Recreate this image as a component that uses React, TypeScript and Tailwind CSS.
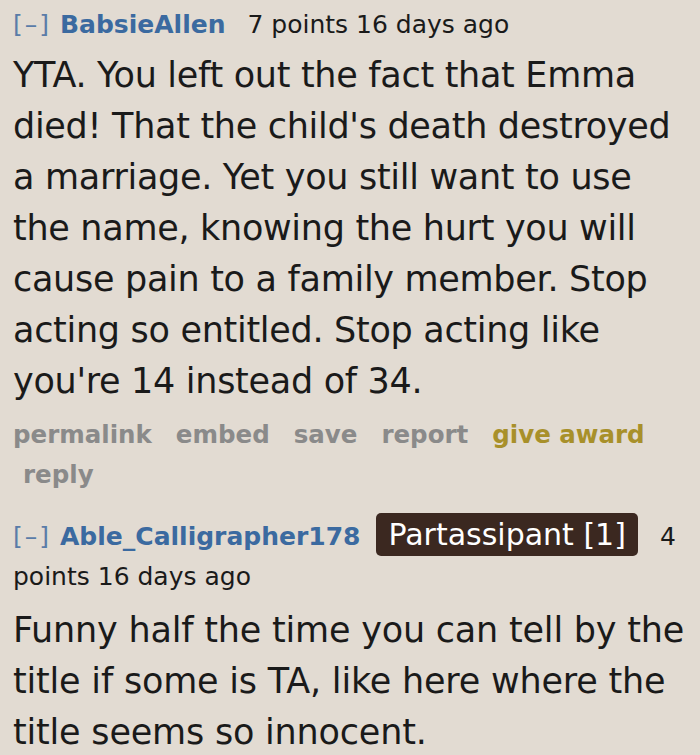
export default function App() {
  return (
    <div className="min-h-[755px] w-[700px] bg-[#e2dbd2] font-['DejaVu_Sans',sans-serif] text-[#1a1a1a]">
      <div className="pl-[13px] pt-[8px]">
        <div className="flex items-baseline text-[25px] leading-[34px]">
          <span className="tracking-[2px] text-[#5a7ca8]">[–]</span>
          <span className="ml-[9px] font-bold text-[#3b6aa0]">BabsieAllen</span>
          <span className="ml-[22px]">7 points 16 days ago</span>
        </div>
        <p className="mt-[8px] pr-[4px] text-[35px] leading-[51px] tracking-[-0.3px]">
          YTA. You left out the fact that Emma died! That the child's death destroyed a marriage. Yet you still want to use
          the name, knowing the hurt you will cause pain to a family member. Stop acting so entitled. Stop acting like
          you're 14 instead of 34.
        </p>
        <ul className="mt-[8px] flex flex-wrap text-[24.5px] font-bold leading-[40px] text-[#8a8a8a]">
          <li className="pr-[24px]">permalink</li>
          <li className="pr-[24px]">embed</li>
          <li className="pr-[24px]">save</li>
          <li className="pr-[24px]">report</li>
          <li className="pr-[24px] text-[#a8902a]">give award</li>
          <li className="pl-[10px] pr-[24px]">reply</li>
        </ul>
      </div>
      <div className="pl-[13px] pt-[20px]">
        <div className="text-[25px] leading-[40px]">
          <span className="tracking-[2px] text-[#5a7ca8]">[–]</span>
          <span className="ml-[9px] font-bold text-[#3b6aa0]">Able_Calligrapher178</span>
          <span className="ml-[16px] rounded-[5px] bg-[#3b2820] px-[12px] py-[4px] text-[30px] text-white">Partassipant [1]</span>
          <span className="ml-[22px]">4 points 16 days ago</span>
        </div>
        <p className="mt-[8px] pr-[4px] text-[35px] leading-[51px] tracking-[-0.2px]">
          Funny half the time you can tell by the title if some is TA, like here where the title seems so innocent.
        </p>
      </div>
    </div>
  );
}
